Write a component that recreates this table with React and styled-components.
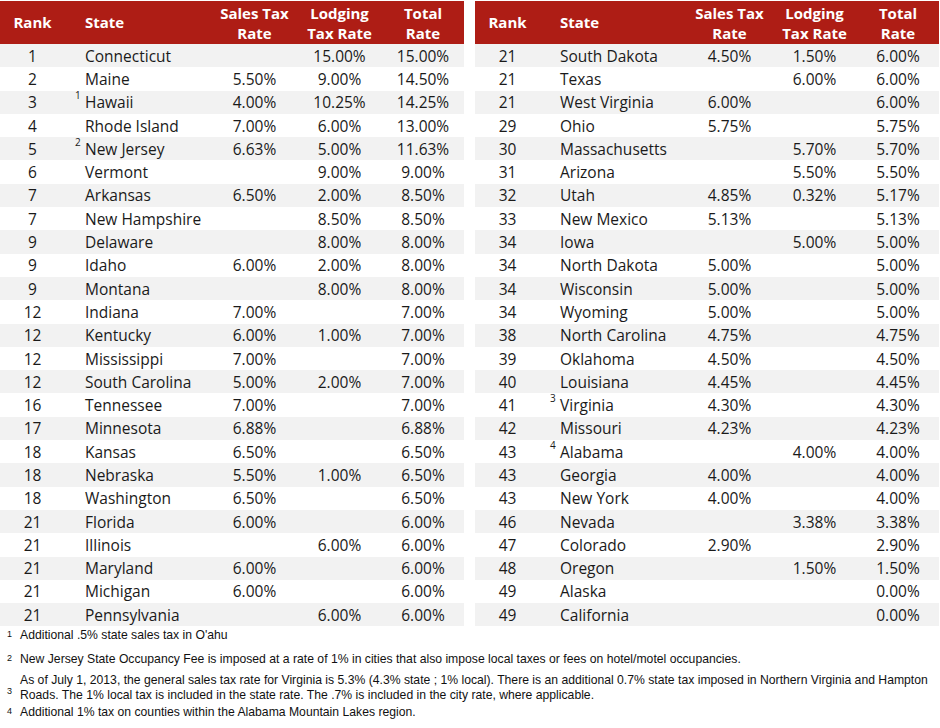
import styled, { createGlobalStyle } from 'styled-components'

const Global = createGlobalStyle`
  body {
    margin: 0;
    background: #fff;
  }
`

const Page = styled.div`
  width: 940px;
  height: 728px;
  padding-top: 1px;
  box-sizing: border-box;
  overflow: hidden;
  background: #fff;
`

const Tables = styled.div`
  display: flex;
  justify-content: space-between;
  padding: 0 1px 0 0;
`

const Table = styled.div`
  width: 464px;
  font-family: 'Open Sans', 'Noto Sans', sans-serif;
  color: #1a1a1a;
`

const cols = '65px 147px 85px 85px 82px'

const Head = styled.div`
  display: grid;
  grid-template-columns: ${cols};
  height: 43px;
  background: #ae1d15;
  color: #fff;
  font-weight: 700;
  font-size: 15px;
  line-height: 20px;
  align-items: center;
`

const HeadCell = styled.div`
  text-align: ${p => (p.left ? 'left' : 'center')};
  padding-left: ${p => (p.left ? '20px' : '0')};
  padding-bottom: ${p => (p.single ? '2px' : '0')};
`

const Row = styled.div`
  display: grid;
  grid-template-columns: ${cols};
  height: 23.3px;
  align-items: center;
  font-size: 15.5px;
  background: ${p => (p.shade ? '#f2f2f2' : '#fff')};
`

const Cell = styled.div`
  text-align: center;
  white-space: nowrap;
`

const StateCell = styled.div`
  position: relative;
  padding-left: 20px;
  white-space: nowrap;
`

const Sup = styled.span`
  position: absolute;
  left: 10px;
  top: -3px;
  font-size: 10px;
`

const Notes = styled.div`
  font-family: 'Liberation Sans', Arial, sans-serif;
  font-size: 12.2px;
  line-height: 15px;
  color: #111;
`

const Note = styled.div`
  display: flex;
  align-items: ${p => (p.low ? 'center' : 'flex-start')};
  margin-top: ${p => p.space}px;
`

const Mark = styled.span`
  width: 20px;
  flex: none;
  padding-left: 7px;
  box-sizing: border-box;
  font-size: 9px;
  line-height: 13px;
  margin-top: ${p => (p.low ? '6px' : '0')};
`

const Lines = styled.div`
  white-space: nowrap;
`

const left = [
  ['1', 'Connecticut', '', '15.00%', '15.00%'],
  ['2', 'Maine', '5.50%', '9.00%', '14.50%'],
  ['3', 'Hawaii', '4.00%', '10.25%', '14.25%', '1'],
  ['4', 'Rhode Island', '7.00%', '6.00%', '13.00%'],
  ['5', 'New Jersey', '6.63%', '5.00%', '11.63%', '2'],
  ['6', 'Vermont', '', '9.00%', '9.00%'],
  ['7', 'Arkansas', '6.50%', '2.00%', '8.50%'],
  ['7', 'New Hampshire', '', '8.50%', '8.50%'],
  ['9', 'Delaware', '', '8.00%', '8.00%'],
  ['9', 'Idaho', '6.00%', '2.00%', '8.00%'],
  ['9', 'Montana', '', '8.00%', '8.00%'],
  ['12', 'Indiana', '7.00%', '', '7.00%'],
  ['12', 'Kentucky', '6.00%', '1.00%', '7.00%'],
  ['12', 'Mississippi', '7.00%', '', '7.00%'],
  ['12', 'South Carolina', '5.00%', '2.00%', '7.00%'],
  ['16', 'Tennessee', '7.00%', '', '7.00%'],
  ['17', 'Minnesota', '6.88%', '', '6.88%'],
  ['18', 'Kansas', '6.50%', '', '6.50%'],
  ['18', 'Nebraska', '5.50%', '1.00%', '6.50%'],
  ['18', 'Washington', '6.50%', '', '6.50%'],
  ['21', 'Florida', '6.00%', '', '6.00%'],
  ['21', 'Illinois', '', '6.00%', '6.00%'],
  ['21', 'Maryland', '6.00%', '', '6.00%'],
  ['21', 'Michigan', '6.00%', '', '6.00%'],
  ['21', 'Pennsylvania', '', '6.00%', '6.00%'],
]

const right = [
  ['21', 'South Dakota', '4.50%', '1.50%', '6.00%'],
  ['21', 'Texas', '', '6.00%', '6.00%'],
  ['21', 'West Virginia', '6.00%', '', '6.00%'],
  ['29', 'Ohio', '5.75%', '', '5.75%'],
  ['30', 'Massachusetts', '', '5.70%', '5.70%'],
  ['31', 'Arizona', '', '5.50%', '5.50%'],
  ['32', 'Utah', '4.85%', '0.32%', '5.17%'],
  ['33', 'New Mexico', '5.13%', '', '5.13%'],
  ['34', 'Iowa', '', '5.00%', '5.00%'],
  ['34', 'North Dakota', '5.00%', '', '5.00%'],
  ['34', 'Wisconsin', '5.00%', '', '5.00%'],
  ['34', 'Wyoming', '5.00%', '', '5.00%'],
  ['38', 'North Carolina', '4.75%', '', '4.75%'],
  ['39', 'Oklahoma', '4.50%', '', '4.50%'],
  ['40', 'Louisiana', '4.45%', '', '4.45%'],
  ['41', 'Virginia', '4.30%', '', '4.30%', '3'],
  ['42', 'Missouri', '4.23%', '', '4.23%'],
  ['43', 'Alabama', '', '4.00%', '4.00%', '4'],
  ['43', 'Georgia', '4.00%', '', '4.00%'],
  ['43', 'New York', '4.00%', '', '4.00%'],
  ['46', 'Nevada', '', '3.38%', '3.38%'],
  ['47', 'Colorado', '2.90%', '', '2.90%'],
  ['48', 'Oregon', '', '1.50%', '1.50%'],
  ['49', 'Alaska', '', '', '0.00%'],
  ['49', 'California', '', '', '0.00%'],
]

const RateTable = ({ rows }) => (
  <Table>
    <Head>
      <HeadCell single>Rank</HeadCell>
      <HeadCell left single>State</HeadCell>
      <HeadCell>Sales Tax<br />Rate</HeadCell>
      <HeadCell>Lodging<br />Tax Rate</HeadCell>
      <HeadCell>Total<br />Rate</HeadCell>
    </Head>
    {rows.map(([rank, state, sales, lodging, total, note], i) => (
      <Row key={state} shade={i % 2 === 0}>
        <Cell>{rank}</Cell>
        <StateCell>
          {note && <Sup>{note}</Sup>}
          {state}
        </StateCell>
        <Cell>{sales}</Cell>
        <Cell>{lodging}</Cell>
        <Cell>{total}</Cell>
      </Row>
    ))}
  </Table>
)

export default function App() {
  return (
    <Page>
      <Global />
      <Tables>
        <RateTable rows={left} />
        <RateTable rows={right} />
      </Tables>
      <Notes>
        <Note space={2}>
          <Mark>1</Mark>
          <Lines>Additional .5% state sales tax in O'ahu</Lines>
        </Note>
        <Note space={9}>
          <Mark>2</Mark>
          <Lines>New Jersey State Occupancy Fee is imposed at a rate of 1% in cities that also impose local taxes or fees on hotel/motel occupancies.</Lines>
        </Note>
        <Note space={6} low>
          <Mark low>3</Mark>
          <Lines>
            As of July 1, 2013, the general sales tax rate for Virginia is 5.3% (4.3% state ; 1% local). There is an additional 0.7% state tax imposed in Northern Virginia and Hampton
            <br />
            Roads. The 1% local tax is included in the state rate. The .7% is included in the city rate, where applicable.
          </Lines>
        </Note>
        <Note space={2}>
          <Mark>4</Mark>
          <Lines>Additional 1% tax on counties within the Alabama Mountain Lakes region.</Lines>
        </Note>
      </Notes>
    </Page>
  )
}
